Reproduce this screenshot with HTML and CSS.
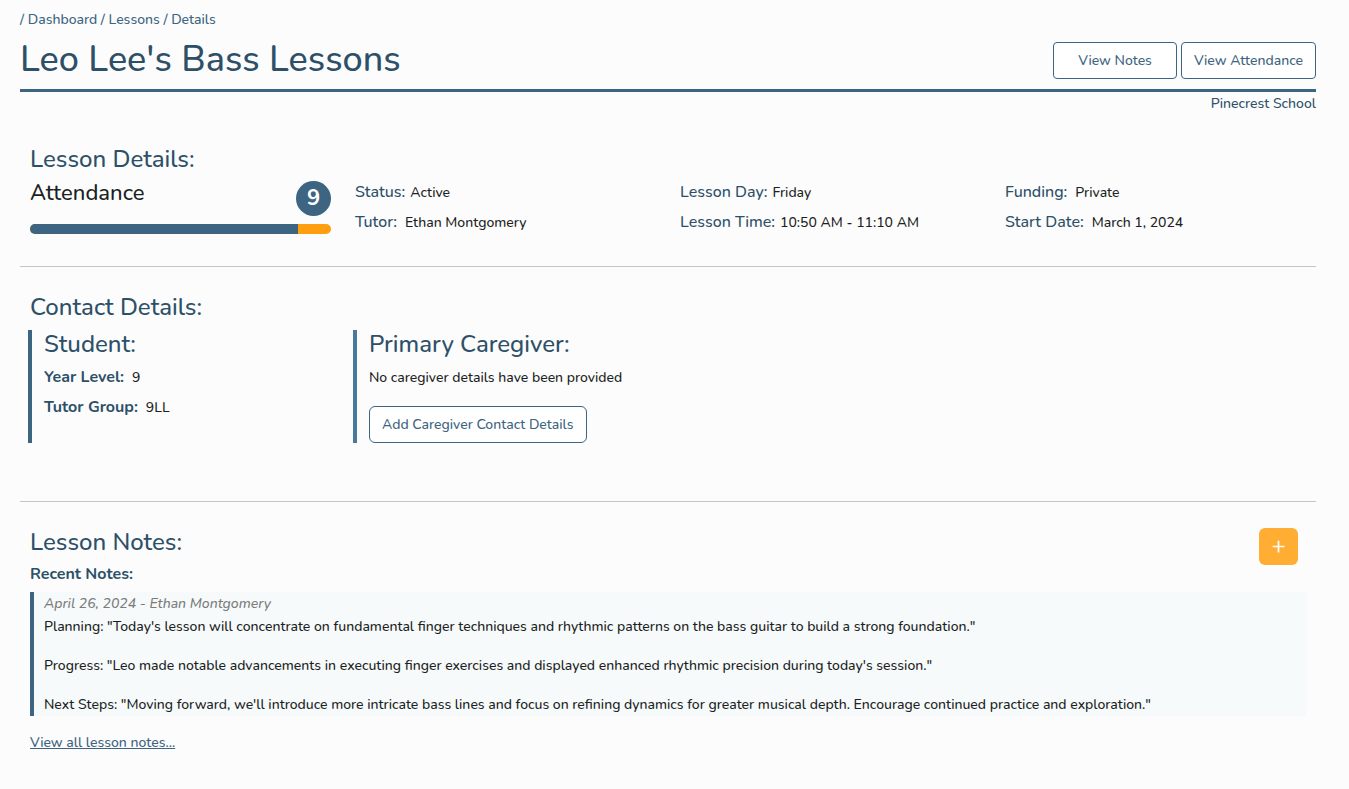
FILE: index.html
```
<!DOCTYPE html>
<html lang="en">
<head>
<meta charset="utf-8">
<meta name="viewport" content="width=device-width, initial-scale=1">
<title>Leo Lee's Bass Lessons</title>
<link rel="stylesheet" href="styles.css">
</head>
<body>
<main class="page">
  <nav class="breadcrumb" aria-label="Breadcrumb">/ <a href="#dashboard">Dashboard</a> / <a href="#lessons">Lessons</a> / <a href="#details">Details</a></nav>
  <header class="page-header">
    <h1 class="page-title">Leo Lee's Bass Lessons</h1>
    <div class="actions">
      <button type="button" class="btn btn-wide">View Notes</button>
      <button type="button" class="btn">View Attendance</button>
    </div>
  </header>
  <p class="school">Pinecrest School</p>

  <section class="section">
    <h2 class="heading">Lesson Details:</h2>
    <div class="details-grid">
      <div class="attendance">
        <div class="attendance-top">
          <h3 class="attendance-title">Attendance</h3>
          <span class="badge">9</span>
        </div>
        <div class="bar"><div class="bar-fill" style="width: 89%"></div></div>
      </div>
      <dl class="facts">
        <div class="fact"><dt>Status:</dt><dd>Active</dd></div>
        <div class="fact fact-spaced"><dt>Tutor:</dt><dd>Ethan Montgomery</dd></div>
      </dl>
      <dl class="facts">
        <div class="fact"><dt>Lesson Day:</dt><dd>Friday</dd></div>
        <div class="fact"><dt>Lesson Time:</dt><dd>10:50 AM - 11:10 AM</dd></div>
      </dl>
      <dl class="facts">
        <div class="fact fact-spaced"><dt>Funding:</dt><dd>Private</dd></div>
        <div class="fact fact-spaced"><dt>Start Date:</dt><dd>March 1, 2024</dd></div>
      </dl>
    </div>
  </section>

  <section class="section section-contact">
    <h2 class="heading">Contact Details:</h2>
    <div class="contact-grid">
      <div class="contact">
        <h3 class="heading contact-heading">Student:</h3>
        <dl class="facts facts-strong">
          <div class="fact fact-spaced"><dt>Year Level:</dt><dd>9</dd></div>
          <div class="fact fact-spaced"><dt>Tutor Group:</dt><dd>9LL</dd></div>
        </dl>
      </div>
      <div class="contact contact-caregiver">
        <h3 class="heading contact-heading">Primary Caregiver:</h3>
        <p class="contact-text">No caregiver details have been provided</p>
        <button type="button" class="btn btn-round">Add Caregiver Contact Details</button>
      </div>
    </div>
  </section>

  <section class="section section-notes">
    <div class="notes-header">
      <div>
        <h2 class="heading">Lesson Notes:</h2>
        <h3 class="notes-subtitle">Recent Notes:</h3>
      </div>
      <button type="button" class="btn-add" aria-label="Add note">
        <svg width="13" height="13" viewBox="0 0 13 13" fill="none" stroke="currentColor" stroke-width="1.7" stroke-linecap="round"><path d="M6.5 1.3v10.4M1.3 6.5h10.4"/></svg>
      </button>
    </div>
    <article class="note">
      <p class="note-meta">April 26, 2024 - Ethan Montgomery</p>
      <p class="note-text">Planning: "Today's lesson will concentrate on fundamental finger techniques and rhythmic patterns on the bass guitar to build a strong foundation."</p>
      <p class="note-text">Progress: "Leo made notable advancements in executing finger exercises and displayed enhanced rhythmic precision during today's session."</p>
      <p class="note-text">Next Steps: "Moving forward, we'll introduce more intricate bass lines and focus on refining dynamics for greater musical depth. Encourage continued practice and exploration."</p>
    </article>
    <a class="all-notes" href="#notes">View all lesson notes...</a>
  </section>
</main>
</body>
</html>
```
FILE: styles.css
```
:root {
  --blue: #3d6480;
  --navy: #2d5068;
  --ink: #1c1f23;
}

* { box-sizing: border-box; }

body {
  margin: 0;
  background: #fcfcfc;
  color: var(--ink);
  font-family: Nunito, Lato, "Open Sans", sans-serif;
  font-size: 14px;
  font-weight: 500;
  line-height: 22px;
}

h1, h2, h3, p, dl, dd { margin: 0; }

.page { padding: 9px 33px 30px 20px; }

.breadcrumb { color: var(--blue); }
.breadcrumb a { color: inherit; text-decoration: none; }

.page-header {
  display: flex;
  align-items: center;
  justify-content: space-between;
  min-height: 61px;
  padding-top: 1px;
  border-bottom: 3px solid var(--blue);
}

.page-title {
  padding-bottom: 2px;
  color: var(--navy);
  font-size: 36px;
  font-weight: 500;
  line-height: 44px;
}

.actions { display: flex; gap: 4px; }

.btn {
  height: 37px;
  padding: 0 12px;
  border: 1px solid var(--blue);
  border-radius: 4px;
  background: #fff;
  color: var(--blue);
  font: inherit;
}
.btn-wide { padding: 0 24px; }
.btn-round { border-radius: 6px; }

.school { padding-top: 1px; color: var(--navy); text-align: right; }

.section {
  padding: 28px 10px 29px;
  border-bottom: 1px solid #c4c6c8;
}

.heading {
  color: var(--navy);
  font-size: 24px;
  font-weight: 500;
  line-height: 32px;
}

.details-grid {
  display: grid;
  grid-template-columns: repeat(4, 1fr);
  gap: 24px;
  padding-top: 2px;
}

.attendance-top {
  display: flex;
  align-items: flex-start;
  justify-content: space-between;
  padding-bottom: 8px;
}
.attendance-title { font-size: 22px; font-weight: 500; line-height: 32px; }

.badge {
  width: 35px;
  height: 35px;
  margin-top: 4px;
  border-radius: 50%;
  background: var(--blue);
  color: #fff;
  font-size: 22px;
  font-weight: 700;
  line-height: 35px;
  text-align: center;
}

.bar {
  height: 10px;
  overflow: hidden;
  border-radius: 5px;
  background: #ff9f0f;
}
.bar-fill { height: 100%; background: var(--blue); }

.fact {
  display: flex;
  gap: 5px;
  align-items: baseline;
  height: 30px;
  line-height: 30px;
}
.fact-spaced { gap: 8px; }
.fact dt { color: var(--navy); font-size: 16px; }
.facts-strong dt { font-weight: 700; }

.section-contact { padding: 24px 8px 58px; }
.section-contact > .heading { padding-left: 2px; }

.contact-grid {
  display: grid;
  grid-template-columns: repeat(4, 1fr);
  gap: 20px;
  padding-top: 7px;
}
.contact { padding-left: 12px; border-left: 4px solid var(--blue); }
.contact-heading { padding-bottom: 4px; line-height: 28px; }
.contact-caregiver { border-color: #4a7a9b; }
.contact-text { padding: 5px 0 17px; white-space: nowrap; }

.section-notes { padding-top: 24px; border-bottom: 0; }

.notes-header {
  display: flex;
  align-items: flex-start;
  justify-content: space-between;
  padding-right: 8px;
}
.notes-subtitle {
  padding-bottom: 2px;
  color: var(--navy);
  font-size: 16px;
  font-weight: 700;
  line-height: 32px;
}

.btn-add {
  display: flex;
  align-items: center;
  justify-content: center;
  width: 39px;
  height: 37px;
  margin-top: 2px;
  padding: 0;
  border: 0;
  border-radius: 6px;
  background: #ffad33;
  color: #fff;
}

.note {
  display: flex;
  flex-direction: column;
  gap: 17px;
  padding: 1px 0 0 10px;
  border-left: 4px solid var(--blue);
  background: #f6fafb;
}
.note-meta { margin-bottom: -16px; color: #7c7c7c; font-style: italic; }

.all-notes { display: inline-block; margin-top: 16px; color: var(--blue); }
```
